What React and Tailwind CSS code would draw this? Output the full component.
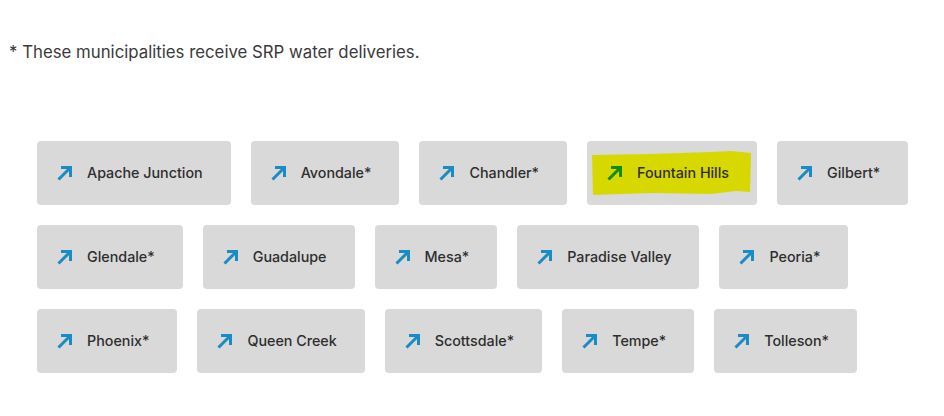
const cities = [
  'Apache Junction',
  'Avondale*',
  'Chandler*',
  'Fountain Hills',
  'Gilbert*',
  'Glendale*',
  'Guadalupe',
  'Mesa*',
  'Paradise Valley',
  'Peoria*',
  'Phoenix*',
  'Queen Creek',
  'Scottsdale*',
  'Tempe*',
  'Tolleson*',
]

function Arrow({ color }) {
  return (
    <svg width="15" height="15" viewBox="0 0 15 15" fill="none" className="shrink-0">
      <path d="M1.5 13.5 L12.5 2.5" stroke={color} strokeWidth="3" />
      <path d="M4 1.5 H13.5 V11" stroke={color} strokeWidth="3" />
    </svg>
  )
}

export default function App() {
  return (
    <div className="w-[944px] h-[416px] bg-white font-['Inter',sans-serif] text-[#333333]">
      {/* Note */}
      <p className="pt-[40px] pl-[9px] text-[16.8px] leading-6 text-[#3a3a3a]">
        * These municipalities receive SRP water deliveries.
      </p>

      {/* City links */}
      <div className="mt-[77px] pl-[37px] pr-[30px] flex flex-wrap gap-5">
        {cities.map((city) => {
          const marked = city === 'Fountain Hills'
          return (
            <a
              key={city}
              href="#"
              className="relative h-16 flex items-center pl-5 pr-7 bg-[#d9d9d9] rounded text-[14.3px] font-medium text-[#2e2e2e]"
            >
              {marked && (
                <svg
                  className="absolute left-[4px] top-[9px]"
                  width="162"
                  height="45"
                  viewBox="0 0 162 45"
                >
                  <path
                    d="M1 5 L60 4 L120 2 L140 1 L160 3 L159 42 L145 41 L120 44 L60 43 L2 45 Z"
                    fill="#d6d800"
                  />
                </svg>
              )}
              <span className="relative flex items-center gap-[15px]">
                <Arrow color={marked ? '#138a13' : '#1b8bc4'} />
                {city}
              </span>
            </a>
          )
        })}
      </div>
    </div>
  )
}
